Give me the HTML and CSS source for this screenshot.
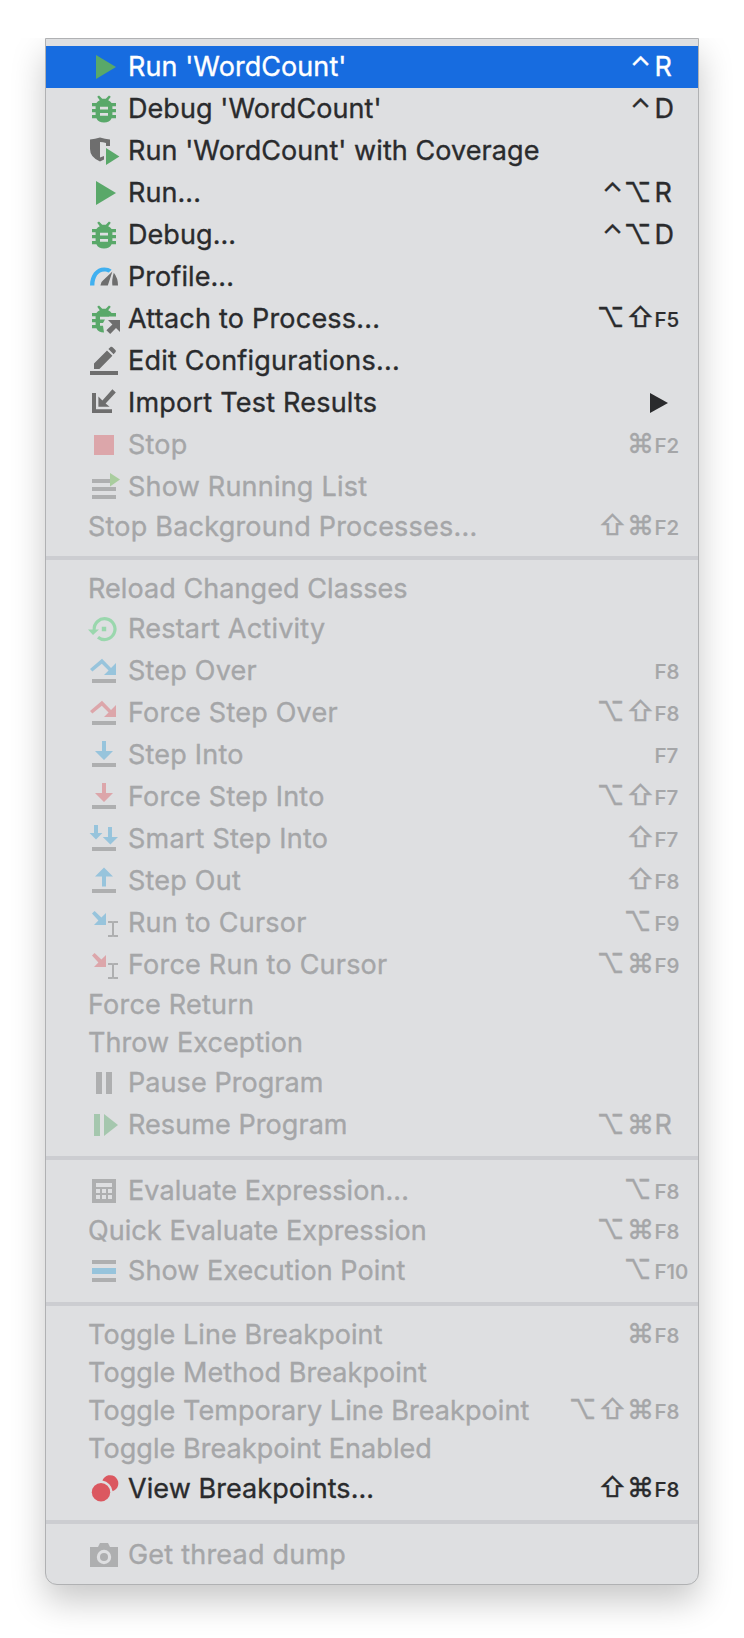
FILE: index.html
```
<!DOCTYPE html>
<html lang="en">
<head>
<meta charset="utf-8">
<title>Run menu</title>
<link rel="stylesheet" href="styles.css">
</head>
<body>
<svg class="defs" aria-hidden="true">
  <symbol id="run" viewBox="0 0 16 16"><path class="green" d="M4 2 14 8 4 14z"/></symbol>
  <symbol id="bug" viewBox="0 0 16 16">
    <path class="green" fill-rule="evenodd" d="M4.6 1.9 5.5 1.2 7.1 2.9h1.8L10.5 1.2l.9.7L10.1 3.6Q11.3 4.1 11.8 5H14v1.6h-1.8V8H14v1.6h-1.8V11H14v1.6h-2.2Q10.8 14.8 8 14.8T4.200 12.600H2V11h1.800V9.600H2V8h1.800V6.600H2V5h2.200Q4.700 4.100 5.900 3.600zM6 6.900v1.400h4V6.900zM6 10v1.400h4V10z"/>
  </symbol>
  <symbol id="coverage" viewBox="0 0 16 16">
    <path class="gray" fill-rule="evenodd" d="M1 2.200Q3.500 2 6 1.200 8.500 2 11 2.200V5.500H9V4Q7.500 3.600 6 3.500V11.200L8 10.500V12.300L6 13.200Q1 11.200 1 7z"/>
    <path class="green" d="M9 6.500 15.700 10.800 9 15z"/>
  </symbol>
  <symbol id="profile" viewBox="0 0 16 16">
    <path class="sky" d="M1 12.200C1 7 4 3.200 8.100 3.200c1.500 0 2.700.4 3.700 1.200L10.400 5.800C9.800 5.400 9 5.200 8.100 5.200 5.200 5.200 3.200 8 3.200 12.200z"/>
    <path class="gray" d="M12.200 5.200 9.900 12.200H6.200Q6.200 10.500 7.600 9.600zM12.900 5.900Q15 8.500 15 12.200H12.200Q11.800 9.500 12.900 5.900z"/>
  </symbol>
  <symbol id="attach" viewBox="0 0 16 16">
    <path class="green" d="M4.600 1.900 5.500 1.200 7.100 2.900h1.800L10.500 1.200l.9.700L10.100 3.600Q11.300 4.100 11.800 5H14v1.700H10.500V6.900H6V8.300H8.500L7.500 10H6v1.400H7.500L8 14.800Q5.200 14.800 4.200 12.600H2V11h1.800V9.600H2V8h1.800V6.600H2V5h2.200Q4.700 4.100 5.900 3.600z"/>
    <path class="gray" d="M10 8.500H16V14.500L14 12.500 11.100 15.500 9.200 13.600 12.200 10.700z"/>
  </symbol>
  <symbol id="edit" viewBox="0 0 16 16">
    <path class="gray" d="M1 13h14v2H1zM3 12V9.200L9.500 2.700 12.200 5.400 5.700 12zM10.200 2 11.400.900Q11.900.700 12.300 1.100L13.800 2.600Q14.100 3 13.800 3.500L12.800 4.600z"/>
  </symbol>
  <symbol id="import" viewBox="0 0 16 16">
    <path class="gray" d="M2 3h2v8.100h8V13H2zM5.200 4.800 7.200 6.700 12.200 1.100 13.900 2.800 8.800 8.200 10.800 9.900H5.200z"/>
  </symbol>
  <symbol id="stop" viewBox="0 0 16 16"><path class="red" d="M3 3h10v10H3z"/></symbol>
  <symbol id="running" viewBox="0 0 16 16">
    <path class="gray" d="M2 4h9v2H2zM2 8h12v2H2zM2 12h12v2H2z"/><path class="lime" d="M11 1 16 4.300 11 7.700z"/>
  </symbol>
  <symbol id="restart" viewBox="0 0 16 16">
    <path class="mint-line" d="M3.100 8.500A5.200 5.200 0 1 1 5 12.100"/><path class="mint" d="M0 8.200H5.500L2.500 11zM6.900 6.900h2.200v2.200H6.900z"/>
  </symbol>
  <symbol id="over" viewBox="0 0 16 16">
    <path class="gray" d="M2 12h12v2H2z"/><path class="tint" d="M1 7 7 1.900 11.500 6.500 14 4v6H8L10.300 7.800 6.900 4.400 2.200 8.300z"/>
  </symbol>
  <symbol id="into" viewBox="0 0 16 16">
    <path class="gray" d="M2 12h12v2H2z"/><path class="tint" d="M7 1h2v5h3.500L8 10.500 3.500 6H7z"/>
  </symbol>
  <symbol id="smart" viewBox="0 0 16 16">
    <path class="gray" d="M2 12h12v2H2z"/><path class="tint" d="M3 1h2v4h2.200L4 8.200.800 5H3zM10 2h2v5h3L11.200 10.700 7.400 7H10z"/>
  </symbol>
  <symbol id="out" viewBox="0 0 16 16">
    <path class="gray" d="M2 12h12v2H2z"/><path class="tint" d="M8 1.200 12.500 5.700H9V10.700H7V5.700H3.500z"/>
  </symbol>
  <symbol id="cursor" viewBox="0 0 16 16">
    <path class="tint" d="M2 3.300 3.300 2 6.700 5.300 9 3V9H3L5.200 6.700z"/>
    <path class="gray" d="M10 7h2.200l.3.300.3-.3H15v1h-2v6h2v1h-2.200l-.3-.3-.3.300H10v-1h2V8h-2z"/>
  </symbol>
  <symbol id="pause" viewBox="0 0 16 16"><path class="gray" d="M4 2.500h3v11H4zM9 2.500h3v11H9z"/></symbol>
  <symbol id="resume" viewBox="0 0 16 16"><path class="green" d="M3 2.500h3v11H3zM8 2.500 15 8 8 13.500z"/></symbol>
  <symbol id="calc" viewBox="0 0 16 16">
    <path class="gray" fill-rule="evenodd" d="M2 2h12v12H2zM4 4v2h8V4zM4 7v2h2V7zM7 7v2h2V7zM10 7v2h2V7zM4 10v2h2v-2zM7 10v2h2v-2zM10 10v2h2v-2z"/>
  </symbol>
  <symbol id="point" viewBox="0 0 16 16">
    <path class="gray" d="M2 2.500h12v2H2zM2 11.500h12v2H2z"/><path class="tint" d="M2 6.500h12v3H2z"/>
  </symbol>
  <symbol id="breaks" viewBox="0 0 16 16">
    <circle class="red" cx="6.500" cy="9.600" r="4.600"/><path class="red" d="M7.200 3.800A4.100 4.100 0 1 1 12.300 9.100 6 6 0 0 0 7.200 3.800z"/>
  </symbol>
  <symbol id="camera" viewBox="0 0 16 16">
    <path class="gray" fill-rule="evenodd" d="M1 4h4l1-2h4l1 2h4v10H1zM8 5.400a3.600 3.600 0 1 0 0 7.200 3.600 3.600 0 0 0 0-7.200z"/><circle class="gray" cx="8" cy="9" r="2"/>
  </symbol>
</svg>

<ul class="menu">
  <li class="item selected"><svg class="icon"><use href="#run"/></svg><span class="label">Run 'WordCount'</span><span class="keys"><i class="ctrl">⌃</i><b>R</b></span></li>
  <li class="item"><svg class="icon"><use href="#bug"/></svg><span class="label">Debug 'WordCount'</span><span class="keys"><i class="ctrl">⌃</i><b>D</b></span></li>
  <li class="item"><svg class="icon"><use href="#coverage"/></svg><span class="label">Run 'WordCount' with Coverage</span></li>
  <li class="item"><svg class="icon"><use href="#run"/></svg><span class="label">Run...</span><span class="keys"><i class="ctrl">⌃</i><i class="opt">⌥</i><b>R</b></span></li>
  <li class="item"><svg class="icon"><use href="#bug"/></svg><span class="label">Debug...</span><span class="keys"><i class="ctrl">⌃</i><i class="opt">⌥</i><b>D</b></span></li>
  <li class="item"><svg class="icon"><use href="#profile"/></svg><span class="label">Profile...</span></li>
  <li class="item wide"><svg class="icon"><use href="#attach"/></svg><span class="label">Attach to Process...</span><span class="keys"><i class="opt">⌥</i><i class="shift">⇧</i><b class="fn">F5</b></span></li>
  <li class="item wide"><svg class="icon"><use href="#edit"/></svg><span class="label">Edit Configurations...</span></li>
  <li class="item wide"><svg class="icon"><use href="#import"/></svg><span class="label">Import Test Results</span><svg class="submenu" viewBox="0 0 18 20"><path d="M0 0 18 10 0 20z"/></svg></li>
  <li class="item off wide"><svg class="icon"><use href="#stop"/></svg><span class="label">Stop</span><span class="keys"><i class="cmd">⌘</i><b class="fn">F2</b></span></li>
  <li class="item off wide"><svg class="icon"><use href="#running"/></svg><span class="label">Show Running List</span></li>
  <li class="item plain off wide"><span class="label">Stop Background Processes...</span><span class="keys"><i class="shift">⇧</i><i class="cmd">⌘</i><b class="fn">F2</b></span></li>
  <li class="separator"></li>
  <li class="item plain off"><span class="label">Reload Changed Classes</span></li>
  <li class="item off wide"><svg class="icon"><use href="#restart"/></svg><span class="label">Restart Activity</span></li>
  <li class="item off wide"><svg class="icon"><use href="#over"/></svg><span class="label">Step Over</span><span class="keys"><b class="fn">F8</b></span></li>
  <li class="item off wide force"><svg class="icon"><use href="#over"/></svg><span class="label">Force Step Over</span><span class="keys"><i class="opt">⌥</i><i class="shift">⇧</i><b class="fn">F8</b></span></li>
  <li class="item off wide"><svg class="icon"><use href="#into"/></svg><span class="label">Step Into</span><span class="keys"><b class="fn">F7</b></span></li>
  <li class="item off wide force"><svg class="icon"><use href="#into"/></svg><span class="label">Force Step Into</span><span class="keys"><i class="opt">⌥</i><i class="shift">⇧</i><b class="fn">F7</b></span></li>
  <li class="item off wide"><svg class="icon"><use href="#smart"/></svg><span class="label">Smart Step Into</span><span class="keys"><i class="shift">⇧</i><b class="fn">F7</b></span></li>
  <li class="item off wide"><svg class="icon"><use href="#out"/></svg><span class="label">Step Out</span><span class="keys"><i class="shift">⇧</i><b class="fn">F8</b></span></li>
  <li class="item off wide"><svg class="icon"><use href="#cursor"/></svg><span class="label">Run to Cursor</span><span class="keys"><i class="opt">⌥</i><b class="fn">F9</b></span></li>
  <li class="item off wide force"><svg class="icon"><use href="#cursor"/></svg><span class="label">Force Run to Cursor</span><span class="keys"><i class="opt">⌥</i><i class="cmd">⌘</i><b class="fn">F9</b></span></li>
  <li class="item plain off wide"><span class="label">Force Return</span></li>
  <li class="item plain off"><span class="label">Throw Exception</span></li>
  <li class="item off"><svg class="icon"><use href="#pause"/></svg><span class="label">Pause Program</span></li>
  <li class="item off"><svg class="icon"><use href="#resume"/></svg><span class="label">Resume Program</span><span class="keys"><i class="opt">⌥</i><i class="cmd">⌘</i><b>R</b></span></li>
  <li class="separator"></li>
  <li class="item off"><svg class="icon"><use href="#calc"/></svg><span class="label">Evaluate Expression...</span><span class="keys"><i class="opt">⌥</i><b class="fn">F8</b></span></li>
  <li class="item plain off"><span class="label">Quick Evaluate Expression</span><span class="keys"><i class="opt">⌥</i><i class="cmd">⌘</i><b class="fn">F8</b></span></li>
  <li class="item off"><svg class="icon"><use href="#point"/></svg><span class="label">Show Execution Point</span><span class="keys"><i class="opt">⌥</i><b class="fn">F10</b></span></li>
  <li class="separator"></li>
  <li class="item plain off"><span class="label">Toggle Line Breakpoint</span><span class="keys"><i class="cmd">⌘</i><b class="fn">F8</b></span></li>
  <li class="item plain off"><span class="label">Toggle Method Breakpoint</span></li>
  <li class="item plain off"><span class="label">Toggle Temporary Line Breakpoint</span><span class="keys"><i class="opt">⌥</i><i class="shift">⇧</i><i class="cmd">⌘</i><b class="fn">F8</b></span></li>
  <li class="item plain off"><span class="label">Toggle Breakpoint Enabled</span></li>
  <li class="item"><svg class="icon"><use href="#breaks"/></svg><span class="label">View Breakpoints...</span><span class="keys"><i class="shift">⇧</i><i class="cmd">⌘</i><b class="fn">F8</b></span></li>
  <li class="separator"></li>
  <li class="item off wide"><svg class="icon"><use href="#camera"/></svg><span class="label">Get thread dump</span></li>
</ul>
</body>
</html>
```
FILE: styles.css
```
* { box-sizing: border-box; }
body {
  margin: 0;
  height: 1638px;
  padding: 38px 45px 0;
  overflow: hidden;
  background: #fff;
  font-family: Inter, "Liberation Sans", sans-serif;
  font-size: 27px;
  color: #2a2b2d;
}
.defs { display: none; }
.menu {
  list-style: none;
  margin: 0;
  padding: 7px 0 8px;
  width: 654px;
  background: #dedfe1;
  border: 1px solid #b0b1b3;
  border-radius: 0 0 12px 12px;
  box-shadow: 0 16px 34px rgba(0, 0, 0, .22);
  clip-path: inset(0 -45px -54px -45px);
}
.item {
  --tint: #389fd6;
  display: flex;
  align-items: center;
  height: 42px;
  padding-left: 42px;
  line-height: 38px;
  letter-spacing: .07px;
  -webkit-text-stroke: .35px currentColor;
}
.wide { letter-spacing: .22px; }
.plain { height: 38px; }
.selected { background: #176ce0; color: #fff; }
.off { color: #a5a6a8; }
.force { --tint: #db5860; }
.icon { flex: none; width: 32px; height: 32px; margin-right: 8px; }
.off .icon { opacity: .42; }
.label { white-space: nowrap; }
.keys {
  display: flex;
  align-items: baseline;
  justify-content: flex-end;
  margin-left: auto;
  letter-spacing: 0;
}
.keys::before { content: "\200b"; }
.keys i { font-style: normal; width: 28px; text-align: center; }
.keys .opt { transform: translateX(-2px); }
.keys .opt:nth-last-child(2) { transform: translateX(-3px); }
.keys b { font-weight: 400; width: 43.5px; }
.keys .fn { font-size: 20.5px; font-weight: 500; -webkit-text-stroke-width: .2px; }
.submenu { width: 18px; height: 20px; margin: 0 30px 0 auto; fill: #2a2b2d; }
.separator { height: 24px; border: solid #dedfe1; border-width: 10px 0; background: #cccdd1; }
.green { fill: #59a869; }
.gray { fill: #6e6e6e; }
.red { fill: #db5860; }
.lime { fill: #62b543; }
.sky { fill: #40b0f0; }
.mint { fill: #3ece68; }
.mint-line { fill: none; stroke: #3ece68; stroke-width: 1.6; }
.tint { fill: var(--tint); }
```
